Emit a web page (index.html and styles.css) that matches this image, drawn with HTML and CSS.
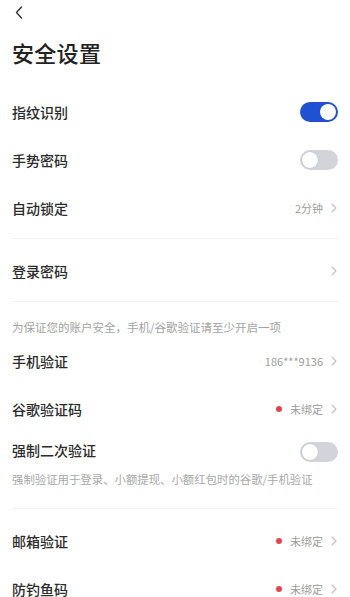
FILE: index.html
```html
<!DOCTYPE html>
<html lang="zh">
<head>
<meta charset="utf-8">
<link rel="stylesheet" href="styles.css">
</head>
<body>
<div class="page">
  <div class="nav">
    <svg class="back" width="8" height="13" viewBox="0 0 8 13"><path d="M6.5 1 L1.5 6.5 L6.5 12" fill="none" stroke="#333" stroke-width="1.4" stroke-linecap="round" stroke-linejoin="round"/></svg>
  </div>
  <h1 class="title">安全设置</h1>

  <section class="group first">
    <div class="row"><span class="label">指纹识别</span><span class="switch on"><span class="knob"></span></span></div>
    <div class="row"><span class="label">手势密码</span><span class="switch"><span class="knob"></span></span></div>
    <div class="row"><span class="label">自动锁定</span><span class="value">2分钟<svg class="chev" width="6" height="10" viewBox="0 0 6 10"><path d="M1 1 L5 5 L1 9" fill="none" stroke="#c2c2c2" stroke-width="1.1" stroke-linecap="round" stroke-linejoin="round"/></svg></span></div>
  </section>

  <section class="group">
    <div class="row"><span class="label">登录密码</span><span class="value"><svg class="chev" width="6" height="10" viewBox="0 0 6 10"><path d="M1 1 L5 5 L1 9" fill="none" stroke="#c2c2c2" stroke-width="1.1" stroke-linecap="round" stroke-linejoin="round"/></svg></span></div>
  </section>

  <section class="group">
    <p class="hint">为保证您的账户安全，手机/谷歌验证请至少开启一项</p>
    <div class="row"><span class="label">手机验证</span><span class="value">186***9136<svg class="chev" width="6" height="10" viewBox="0 0 6 10"><path d="M1 1 L5 5 L1 9" fill="none" stroke="#c2c2c2" stroke-width="1.1" stroke-linecap="round" stroke-linejoin="round"/></svg></span></div>
    <div class="row"><span class="label">谷歌验证码</span><span class="value"><span class="dot"></span>未绑定<svg class="chev" width="6" height="10" viewBox="0 0 6 10"><path d="M1 1 L5 5 L1 9" fill="none" stroke="#c2c2c2" stroke-width="1.1" stroke-linecap="round" stroke-linejoin="round"/></svg></span></div>
    <div class="block">
      <div class="block-head"><span class="label">强制二次验证</span><span class="switch"><span class="knob"></span></span></div>
      <p class="sub">强制验证用于登录、小额提现、小额红包时的谷歌/手机验证</p>
    </div>
  </section>

  <section class="group last">
    <div class="row"><span class="label">邮箱验证</span><span class="value"><span class="dot"></span>未绑定<svg class="chev" width="6" height="10" viewBox="0 0 6 10"><path d="M1 1 L5 5 L1 9" fill="none" stroke="#c2c2c2" stroke-width="1.1" stroke-linecap="round" stroke-linejoin="round"/></svg></span></div>
    <div class="row"><span class="label">防钓鱼码</span><span class="value"><span class="dot"></span>未绑定<svg class="chev" width="6" height="10" viewBox="0 0 6 10"><path d="M1 1 L5 5 L1 9" fill="none" stroke="#c2c2c2" stroke-width="1.1" stroke-linecap="round" stroke-linejoin="round"/></svg></span></div>
  </section>
</div>
</body>
</html>
```

FILE: styles.css
```css
html, body {
  margin: 0;
  padding: 0;
  background: #fff;
}
body {
  font-family: "Noto Sans CJK SC", "Noto Sans", sans-serif;
  color: #2a2a2a;
  overflow: hidden;
}
.page {
  padding: 0 12px;
}
.nav {
  height: 38px;
  display: flex;
  align-items: flex-start;
  padding-top: 6px;
  box-sizing: border-box;
}
.back {
  margin-left: 3px;
  display: block;
}
.title {
  margin: 0;
  font-size: 22px;
  line-height: 28px;
  height: 28px;
  font-weight: 500;
  color: #222;
  letter-spacing: 0.3px;
}
.group {
  padding: 8px 0 6px;
  border-bottom: 1px solid #f1f1f1;
}
.group.first {
  padding-top: 22px;
}
.group.last {
  border-bottom: none;
}
.row {
  height: 48px;
  display: flex;
  align-items: center;
  justify-content: space-between;
}
.label {
  font-size: 14px;
  font-weight: 500;
  color: #2b2b2b;
  line-height: 20px;
}
.value {
  display: flex;
  align-items: center;
  font-size: 11px;
  color: #9c9c9c;
  line-height: 16px;
  margin-right: 1px;
}
.chev {
  display: block;
  margin-left: 8px;
}
.dot {
  width: 6px;
  height: 6px;
  border-radius: 50%;
  background: #e2444c;
  margin-right: 8px;
}
.switch {
  width: 38px;
  height: 20px;
  border-radius: 10px;
  background: #d2d4da;
  display: flex;
  align-items: center;
  padding: 0 2px;
  box-sizing: border-box;
}
.switch .knob {
  width: 16px;
  height: 16px;
  border-radius: 50%;
  background: #fff;
  box-shadow: 0 0 0 0.5px rgba(0,0,0,0.12);
}
.switch.on {
  background: #1f51d3;
  justify-content: flex-end;
}
.hint {
  margin: 7px 0 0;
  font-size: 11.5px;
  line-height: 20px;
  color: #a3a3a3;
}
.block {
  padding: 7px 0 15px;
}
.block-head {
  display: flex;
  align-items: center;
  justify-content: space-between;
  height: 20px;
}
.block-head .switch {
  margin-top: 3px;
}
.sub {
  margin: 11px 0 0;
  font-size: 11.4px;
  line-height: 16px;
  color: #a8a8a8;
}
```
